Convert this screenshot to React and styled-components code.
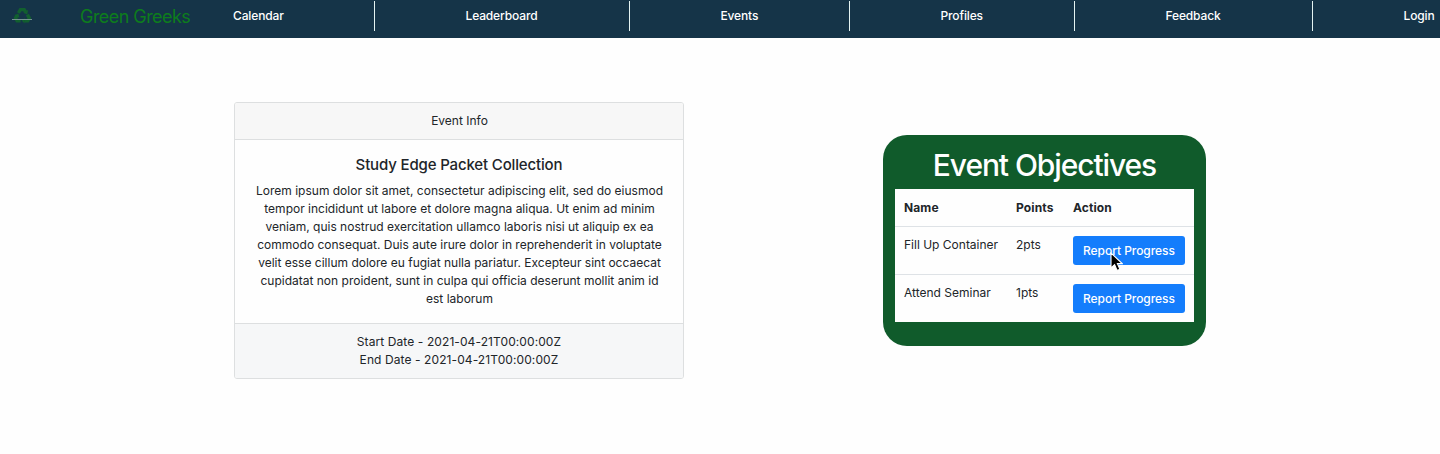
import React from "react";
import styled, { createGlobalStyle } from "styled-components";

const Global = createGlobalStyle`
  * { box-sizing: border-box; }
  body {
    margin: 0;
    background: #fefefe;
    color: #212529;
    font-family: Inter, "Liberation Sans", sans-serif;
    font-size: 12px;
    line-height: 18px;
    overflow: hidden;
  }
`;

const Page = styled.div`
  height: 454px;
  overflow: hidden;
`;

const Navbar = styled.nav`
  display: flex;
  align-items: flex-start;
  height: 38px;
  padding-left: 11px;
  background: #153448;
  overflow: hidden;
`;

const Logo = styled.svg`
  flex: none;
  width: 22px;
  height: 18px;
  margin-top: 6px;
`;

const Brand = styled.span`
  flex: none;
  width: 153px;
  margin-left: 47px;
  padding-top: 5px;
  color: #0d7d1c;
  font-size: 18px;
  line-height: 24px;
  letter-spacing: -0.55px;
  white-space: nowrap;
`;

const Links = styled.div`
  display: grid;
  grid-template-columns: 142px 255px 220px 225px 238px 128px;
  margin-top: 1px;
`;

const NavLink = styled.a`
  height: 30px;
  padding: 6px 0 0 ${(p) => (p.$first ? 0 : 90.5)}px;
  border-right: ${(p) => (p.$last ? "none" : "1px solid #e4f3f2")};
  color: #fff;
  font-weight: 500;
  letter-spacing: -0.14px;
  white-space: nowrap;
`;

const Main = styled.main`
  display: flex;
  align-items: flex-start;
  padding: 64px 234px 0;
  justify-content: space-between;
`;

const Card = styled.section`
  width: 450px;
  height: 277px;
  border: 1px solid #dddfe0;
  border-radius: 3px;
  text-align: center;
`;

const CardHeader = styled.header`
  height: 37px;
  padding: 9px 0 0 1px;
  background: #f7f7f7;
  border-bottom: 1px solid #dddfe0;
  border-radius: 2px 2px 0 0;
`;

const CardBody = styled.div`
  height: 183px;
  padding: 16px 15px 0;
`;

const CardTitle = styled.h5`
  margin: 0 0 8px;
  font-size: 15px;
  font-weight: 500;
  line-height: 18px;
  letter-spacing: -0.15px;
`;

const CardText = styled.p`
  margin: 0;
  padding-left: 1px;
`;

const CardFooter = styled.footer`
  height: 55px;
  padding-top: 9px;
  background: #f6f7f8;
  border-top: 1px solid #dddfe0;
  border-radius: 0 0 2px 2px;
  letter-spacing: 0.09px;
`;

const Objectives = styled.section`
  width: 323px;
  height: 211px;
  margin-top: 33px;
  padding: 12px 12px 0;
  border-radius: 24px;
  background: #105b2b;
`;

const ObjectivesTitle = styled.h1`
  margin: 0;
  height: 42px;
  color: #fff;
  font-size: 30px;
  font-weight: 500;
  line-height: 37px;
  letter-spacing: -1.1px;
  text-align: center;
  white-space: nowrap;
`;

const Table = styled.div`
  height: 133px;
  background: #fefefe;
`;

const Row = styled.div`
  display: grid;
  grid-template-columns: 112px 57px 112px;
  height: ${(p) => (p.$head ? 37 : 48)}px;
  padding: ${(p) => (p.$head ? 10 : 9)}px 9px 0;
  border-top: ${(p) => (p.$head ? "none" : "1px solid #dee2e6")};
  font-weight: ${(p) => (p.$head ? 700 : 400)};
  letter-spacing: ${(p) => (p.$head ? 0.12 : 0)}px;
`;

const Button = styled.button`
  width: 112px;
  height: 29px;
  padding: 0;
  border: 0;
  border-radius: 3px;
  background: #147dfc;
  color: #fff;
  font: 500 12px/29px Inter, "Liberation Sans", sans-serif;
  letter-spacing: -0.05px;
  position: relative;
`;

const Pointer = styled.svg`
  position: absolute;
  left: 36px;
  top: 16px;
  width: 14px;
  height: 21px;
  z-index: 1;
`;

const links = ["Calendar", "Leaderboard", "Events", "Profiles", "Feedback", "Login"];
const objectives = [
  { name: "Fill Up Container", points: "2pts", hovered: true },
  { name: "Attend Seminar", points: "1pts", hovered: false },
];

function RecycleLogo() {
  return (
    <Logo viewBox="0 0 22 18" fill="none">
      <g stroke="#12602f" strokeWidth="3.4">
        <path d="M7.4 7 9.4 3.6h3.8l1.6 2.6" />
        <path d="m16.3 8.6 2 3.4-1.6 2.8h-3.4" />
        <path d="M9.6 14.8H6.2L4.6 12l1.6-2.8" />
      </g>
      <path d="m17.2 4-1 4.4-4-1.6zM13.6 12v5.6l-2.8-2.8zM3.4 9.4l4-1.8 1 4.2z" fill="#12602f" />
      <path d="M1 13.5h20" stroke="#73938e" strokeWidth="1" />
    </Logo>
  );
}

export default function App() {
  return (
    <Page>
      <Global />
      <Navbar>
        <RecycleLogo />
        <Brand>Green Greeks</Brand>
        <Links>
          {links.map((label, i) => (
            <NavLink key={label} $first={i === 0} $last={i === links.length - 1}>
              {label}
            </NavLink>
          ))}
        </Links>
      </Navbar>
      <Main>
        <Card>
          <CardHeader>Event Info</CardHeader>
          <CardBody>
            <CardTitle>Study Edge Packet Collection</CardTitle>
            <CardText>
              Lorem ipsum dolor sit amet, consectetur adipiscing elit, sed do eiusmod tempor
              incididunt ut labore et dolore magna aliqua. Ut enim ad minim veniam, quis nostrud
              exercitation ullamco laboris nisi ut aliquip ex ea commodo consequat. Duis aute
              irure dolor in reprehenderit in voluptate velit esse cillum dolore eu fugiat nulla
              pariatur. Excepteur sint occaecat cupidatat non proident, sunt in culpa qui officia
              deserunt mollit anim id est laborum
            </CardText>
          </CardBody>
          <CardFooter>
            <div>Start Date - 2021-04-21T00:00:00Z</div>
            <div>End Date - 2021-04-21T00:00:00Z</div>
          </CardFooter>
        </Card>
        <Objectives>
          <ObjectivesTitle>Event Objectives</ObjectivesTitle>
          <Table>
            <Row $head>
              <span>Name</span>
              <span>Points</span>
              <span>Action</span>
            </Row>
            {objectives.map((o) => (
              <Row key={o.name}>
                <span>{o.name}</span>
                <span>{o.points}</span>
                <Button>
                  Report Progress
                  {o.hovered && (
                    <Pointer viewBox="0 0 14 21">
                      <path
                        d="M2 1v15l3.6-3.4 2.5 5.9 2.8-1.2-2.5-5.7h4.8z"
                        fill="#000"
                        stroke="#fff"
                        strokeWidth="1.1"
                      />
                    </Pointer>
                  )}
                </Button>
              </Row>
            ))}
          </Table>
        </Objectives>
      </Main>
    </Page>
  );
}
